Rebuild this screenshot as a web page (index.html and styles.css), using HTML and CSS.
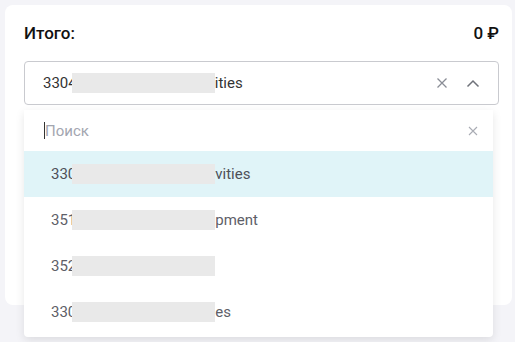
FILE: index.html
```html
<!DOCTYPE html>
<html>
<head>
    <title>Итого</title>
    <link rel="stylesheet" href="styles.css">
</head>
<body>
    <div class="card">
        <div class="total-row">
            <span>Итого:</span>
            <span>0 ₽</span>
        </div>

        <div class="select-wrap">
            <div class="select">
                <div class="select-value">3304<span class="redact"></span>ities</div>
                <span class="icon-btn">
                    <svg width="12" height="12" viewBox="0 0 12 12"><path d="M1.5 1.5l9 9M10.5 1.5l-9 9" stroke="#8a8d96" stroke-width="1.3" fill="none"/></svg>
                </span>
                <span class="icon-btn">
                    <svg width="14" height="9" viewBox="0 0 14 9"><path d="M1.5 7.5L7 2l5.5 5.5" stroke="#6f727a" stroke-width="1.5" fill="none"/></svg>
                </span>
            </div>

            <!-- open dropdown -->
            <div class="dropdown">
                <div class="search">
                    <span class="caret"></span>
                    <span class="placeholder">Поиск</span>
                    <svg width="10" height="10" viewBox="0 0 10 10"><path d="M1 1l8 8M9 1l-8 8" stroke="#a9acb4" stroke-width="1.1" fill="none"/></svg>
                </div>
                <div class="option active">330<span class="redact"></span>vities</div>
                <div class="option">351<span class="redact"></span>pment</div>
                <div class="option">352<span class="redact"></span></div>
                <div class="option">330<span class="redact"></span>es</div>
            </div>
        </div>
    </div>
</body>
</html>
```

FILE: styles.css
```css
body {
    font-family: Roboto, "Liberation Sans", sans-serif;
    background-color: #f4f4f8;
    margin: 0;
    padding: 5px 3px 0 5px;
    height: 342px;
    box-sizing: border-box;
    overflow: hidden;
}

.card {
    background-color: white;
    border-radius: 8px;
    padding: 16px 13px 0 19px;
    height: 300px;
    box-sizing: border-box;
}

.total-row {
    display: flex;
    justify-content: space-between;
    font-size: 17px;
    font-weight: 500;
    line-height: 24px;
    color: #111;
    margin-bottom: 16px;
}

.select-wrap {
    position: relative;
}

.select {
    display: flex;
    align-items: center;
    height: 44px;
    border: 1px solid #c9cacf;
    border-radius: 4px;
    padding: 0 18px;
    box-sizing: border-box;
}

.select-value {
    flex: 1;
    font-size: 15px;
    color: #333;
    display: flex;
    align-items: center;
}

.icon-btn {
    display: flex;
    align-items: center;
    margin-left: 18px;
}

.redact {
    display: inline-block;
    width: 143px;
    height: 20px;
    background-color: #e9e9e9;
    margin-left: -5px;
}

.dropdown {
    position: absolute;
    top: 49px;
    left: 0;
    width: 469px;
    background-color: white;
    box-shadow: 0 3px 10px rgba(0, 0, 0, 0.1);
    border-radius: 0 0 4px 4px;
    padding-bottom: 2px;
}

.search {
    display: flex;
    align-items: center;
    height: 41px;
    padding: 0 15px 0 20px;
    font-size: 15px;
}

.caret {
    width: 1px;
    height: 17px;
    background-color: #333;
}

.placeholder {
    flex: 1;
    color: #a3a6b0;
}

.option {
    display: flex;
    align-items: center;
    height: 46px;
    padding-left: 27px;
    font-size: 15px;
    color: #5e6068;
}

.option .redact {
    margin-left: -4px;
}

.option.active {
    background-color: #e0f4f8;
    color: #4e5058;
}
```
